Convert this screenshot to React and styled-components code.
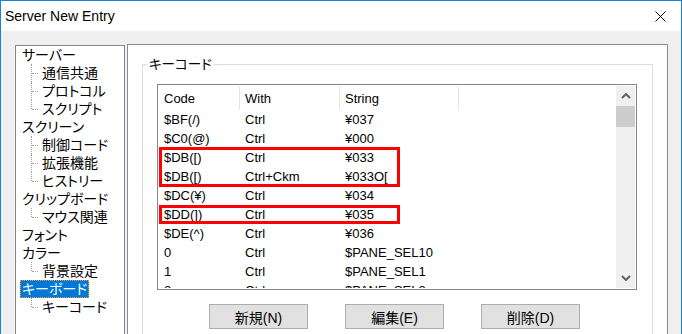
import styled, { createGlobalStyle } from "styled-components";

const GlobalStyle = createGlobalStyle`
  body {
    margin: 0;
    background: #ffffff;
  }
`;

const Window = styled.div`
  width: 682px;
  height: 334px;
  box-sizing: border-box;
  border: 1px solid #1883d7;
  border-bottom: none;
  display: flex;
  flex-direction: column;
  overflow: hidden;
  font-family: "Liberation Sans", "Noto Sans CJK JP", sans-serif;
  font-size: 13px;
  font-feature-settings: "palt";
  color: #000;
`;

const TitleBar = styled.div`
  height: 30px;
  flex: none;
  background: #fff;
  display: flex;
  align-items: center;
  justify-content: space-between;
  padding: 0 15px 0 4px;
`;

const Title = styled.span`
  font-size: 14px;
  color: #000;
`;

const Body = styled.div`
  flex: 1;
  background: #f0f0f0;
  display: flex;
  align-items: flex-start;
  gap: 2px;
  padding: 13px 0 0 14px;
`;

const Tree = styled.ul`
  list-style: none;
  margin: 1px 0 0;
  padding: 0;
  width: 110px;
  height: 320px;
  flex: none;
  box-sizing: border-box;
  border: 1px solid #828790;
  background: #fff;
  font-size: 14px;
`;

const TreeRow = styled.li`
  position: relative;
  height: 18px;
  display: flex;
  align-items: center;
  padding-left: ${(p) => (p.$level ? 24 : 4)}px;

  ${(p) =>
    p.$level
      ? `
    &::before {
      content: "";
      position: absolute;
      left: 15px;
      top: 0;
      height: ${p.$last ? 9 : 18}px;
      border-left: 1px dotted #a0a0a0;
    }
    &::after {
      content: "";
      position: absolute;
      left: 16px;
      top: 9px;
      width: 6px;
      border-top: 1px dotted #a0a0a0;
    }
  `
      : ""}
`;

const TreeLabel = styled.span`
  line-height: 18px;
  padding: 0 2px;
  white-space: nowrap;
  background: ${(p) => (p.$selected ? "#0078d7" : "transparent")};
  color: ${(p) => (p.$selected ? "#fff" : "#000")};
  outline: ${(p) => (p.$selected ? "1px dotted #ff9a2e" : "none")};
  outline-offset: -1px;
`;

const Page = styled.div`
  width: 541px;
  height: 320px;
  flex: none;
  box-sizing: border-box;
  border: 1px solid #898c95;
  background: #fff;
  padding: 12px 14px 0;
`;

const Group = styled.fieldset`
  margin: 0;
  padding: 0;
  min-width: 0;
  border: 1px solid #dcdcdc;
`;

const GroupLegend = styled.legend`
  margin-left: 4px;
  padding: 0 2px;
  line-height: 15px;
  font-size: 13.5px;
`;

const GroupBody = styled.div`
  padding: 12px 15px 20px 14px;
`;

const ListView = styled.div`
  height: 206px;
  box-sizing: border-box;
  border: 1px solid #828790;
  padding: 1px;
  display: flex;
  background: #fff;
`;

const ListMain = styled.div`
  flex: 1;
  position: relative;
  overflow: hidden;
`;

const Columns = styled.div`
  display: grid;
  grid-template-columns: 81px 100px 119px 1fr;
`;

const HeaderRow = styled(Columns)`
  height: 24px;
`;

const HeaderCell = styled.div`
  display: flex;
  align-items: center;
  padding-left: 5px;
  border-right: ${(p) => (p.$last ? "none" : "1px solid #e5e5e5")};
`;

const Row = styled(Columns)`
  height: 19px;
  line-height: 19px;
`;

const Cell = styled.div`
  padding-left: 5px;
  white-space: nowrap;
`;

const Mark = styled.div`
  position: absolute;
  left: 0;
  width: 241px;
  box-sizing: border-box;
  border: 3px solid #ff0000;
  top: ${(p) => p.$top}px;
  height: ${(p) => p.$height}px;
`;

const ScrollBar = styled.div`
  width: 19px;
  flex: none;
  background: #f0f0f0;
  display: flex;
  flex-direction: column;
`;

const ArrowButton = styled.div`
  height: 20px;
  display: flex;
  align-items: center;
  justify-content: center;
`;

const Thumb = styled.div`
  height: 21px;
  background: #cdcdcd;
`;

const Track = styled.div`
  flex: 1;
`;

const ButtonRow = styled.div`
  display: flex;
  gap: 37px;
  margin-top: 14px;
  padding-left: 52px;
`;

const Button = styled.button`
  width: 99px;
  height: 25px;
  box-sizing: border-box;
  border: 1px solid #adadad;
  background: #e1e1e1;
  font-family: inherit;
  font-feature-settings: "palt";
  font-size: 14px;
  color: #000;
  padding: 0;
`;

const Chevron = ({ down }) => (
  <svg width="10" height="6" viewBox="0 0 10 6">
    <path
      d={down ? "M1 1 L5 5 L9 1" : "M1 5 L5 1 L9 5"}
      fill="none"
      stroke="#606060"
      strokeWidth="2"
    />
  </svg>
);

const tree = [
  { label: "サーバー", level: 0 },
  { label: "通信共通", level: 1 },
  { label: "プロトコル", level: 1 },
  { label: "スクリプト", level: 1, last: true },
  { label: "スクリーン", level: 0 },
  { label: "制御コード", level: 1 },
  { label: "拡張機能", level: 1 },
  { label: "ヒストリー", level: 1, last: true },
  { label: "クリップボード", level: 0 },
  { label: "マウス関連", level: 1, last: true },
  { label: "フォント", level: 0 },
  { label: "カラー", level: 0 },
  { label: "背景設定", level: 1, last: true },
  { label: "キーボード", level: 0, selected: true },
  { label: "キーコード", level: 1, last: true },
];

const rows = [
  ["$BF(/)", "Ctrl", "¥037"],
  ["$C0(@)", "Ctrl", "¥000"],
  ["$DB([)", "Ctrl", "¥033"],
  ["$DB([)", "Ctrl+Ckm", "¥033O["],
  ["$DC(¥)", "Ctrl", "¥034"],
  ["$DD(])", "Ctrl", "¥035"],
  ["$DE(^)", "Ctrl", "¥036"],
  ["0", "Ctrl", "$PANE_SEL10"],
  ["1", "Ctrl", "$PANE_SEL1"],
  ["2", "Ctrl", "$PANE_SEL2"],
];

const App = () => {
  return (
    <Window>
      <GlobalStyle />
      <TitleBar>
        <Title>Server New Entry</Title>
        <svg width="11" height="11" viewBox="0 0 11 11">
          <path d="M0.5 0.5 L10.5 10.5 M10.5 0.5 L0.5 10.5" stroke="#000" strokeWidth="1" />
        </svg>
      </TitleBar>
      <Body>
        <Tree>
          {tree.map((item, i) => (
            <TreeRow key={i} $level={item.level} $last={item.last}>
              <TreeLabel $selected={item.selected}>{item.label}</TreeLabel>
            </TreeRow>
          ))}
        </Tree>
        <Page>
          <Group>
            <GroupLegend>キーコード</GroupLegend>
            <GroupBody>
              <ListView>
                <ListMain>
                  <HeaderRow>
                    <HeaderCell>Code</HeaderCell>
                    <HeaderCell>With</HeaderCell>
                    <HeaderCell>String</HeaderCell>
                    <HeaderCell $last />
                  </HeaderRow>
                  {rows.map((r, i) => (
                    <Row key={i}>
                      <Cell>{r[0]}</Cell>
                      <Cell>{r[1]}</Cell>
                      <Cell>{r[2]}</Cell>
                    </Row>
                  ))}
                  <Mark $top={61} $height={40} />
                  <Mark $top={119} $height={19} />
                </ListMain>
                <ScrollBar>
                  <ArrowButton>
                    <Chevron />
                  </ArrowButton>
                  <Thumb />
                  <Track />
                  <ArrowButton>
                    <Chevron down />
                  </ArrowButton>
                </ScrollBar>
              </ListView>
              <ButtonRow>
                <Button>新規(N)</Button>
                <Button>編集(E)</Button>
                <Button>削除(D)</Button>
              </ButtonRow>
            </GroupBody>
          </Group>
        </Page>
      </Body>
    </Window>
  );
};

export default App;
